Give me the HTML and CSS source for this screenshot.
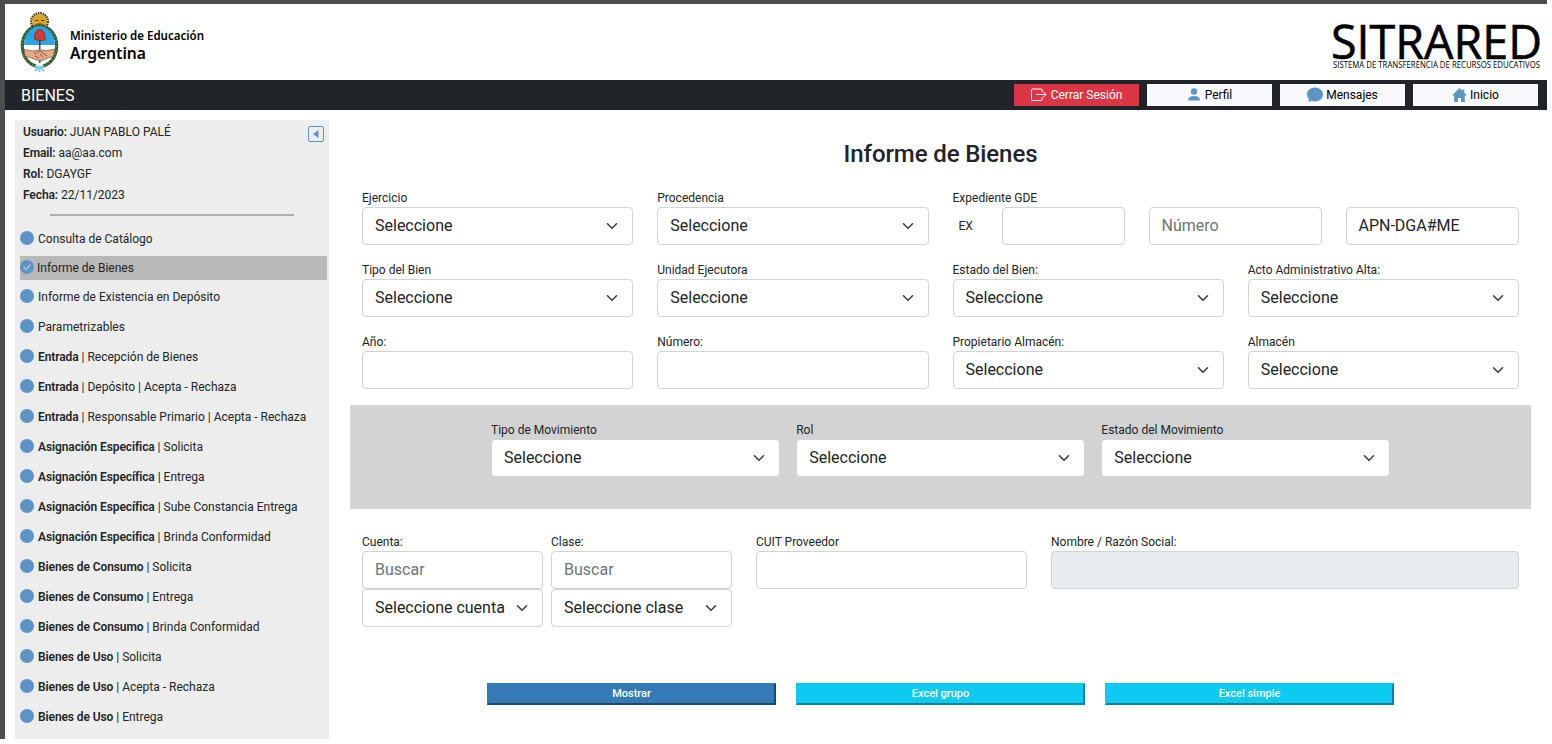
FILE: index.html
```html
<!DOCTYPE html>
<html lang="es">
<head>
<meta charset="utf-8">
<title>Informe de Bienes</title>
<link rel="stylesheet" href="styles.css">
</head>
<body>
<svg class="sprite" aria-hidden="true">
  <symbol id="dot" viewBox="0 0 16 16"><circle cx="8" cy="8" r="8" fill="currentColor"/></symbol>
  <symbol id="check" viewBox="0 0 16 16"><circle cx="8" cy="8" r="8" fill="currentColor"/><path d="M4.6 8.4l2.5 2.5 4.5-5.3" fill="none" stroke="#c4d4e2" stroke-width="1.2" stroke-linecap="round"/></symbol>
  <symbol id="chevron" viewBox="0 0 16 16"><path d="M2 5l6 6 6-6" fill="none" stroke="#343a40" stroke-width="2" stroke-linecap="round" stroke-linejoin="round"/></symbol>
</svg>
<div class="frame">
  <header class="header">
    <svg class="brand" width="200" height="66" viewBox="0 0 200 66">
      <g transform="translate(1 1)">
        <circle cx="18.5" cy="9.500" r="8.200" fill="none" stroke="#3f3516" stroke-width="2.6" stroke-dasharray="1.500 .8"/>
        <circle cx="18.5" cy="9.500" r="7.200" fill="#dfa520"/>
        <path d="M14 8.500h3.500M20 8.500h3.500M16 12h5" stroke="#5b3d0c" stroke-width="1.2"/>
        <ellipse cx="18.5" cy="34" rx="17.2" ry="20.500" fill="#fff" stroke="#2c5c34" stroke-width="3.2"/>
        <ellipse cx="18.5" cy="34" rx="17.2" ry="20.500" fill="none" stroke="#77905f" stroke-width="1.800" stroke-dasharray="1 2.6"/>
        <path d="M3 33a15.5 18.8 0 0 1 31 0z" fill="#2ba6e0"/>
        <path d="M18.8 24v27" stroke="#3b2a25" stroke-width="1.3"/>
        <path d="M13.5 27c.2-6 2-9.500 5.200-9.500 3.800 0 5.300 4 4.900 7.200l1 3c-3 1.200-8 1.200-11.100-.7z" fill="#d83b30" stroke="#6c2723" stroke-width=".7"/>
        <path d="M3 37.500l9 1.500 7-1.200 6 1 8.700-1.800-1 7-7.200 2.500c-4 2.400-8 2.900-13 .3L4 44z" fill="#e2ab86" stroke="#7d5039" stroke-width=".7"/>
        <path d="M13 42l6-3 7 5M14 44l4 2M19 42l3 3" fill="none" stroke="#6d442f" stroke-width=".8"/>
        <path d="M15.500 53.500h6" stroke="#fff" stroke-width="3.600"/>
        <path d="M14 53.500l3 2.500-3 3M23 53.500l-3 2.500 3 3M16 55h5M18.500 54v6" fill="none" stroke="#82cdea" stroke-width="2"/>
      </g>
      <text class="brand-small" x="50" y="28.500" textLength="134" lengthAdjust="spacingAndGlyphs">Ministerio de Educación</text>
      <text class="brand-large" x="50" y="47.500" textLength="76" lengthAdjust="spacingAndGlyphs">Argentina</text>
    </svg>
    <svg class="sitrared" width="212" height="50" viewBox="0 0 212 50">
      <text class="sitrared-name" x="1" y="37" textLength="211" lengthAdjust="spacingAndGlyphs">SITRARED</text>
      <text class="sitrared-sub" x="3" y="45.500" textLength="207" lengthAdjust="spacingAndGlyphs">SISTEMA DE TRANSFERENCIA DE RECURSOS EDUCATIVOS</text>
    </svg>
  </header>
  <nav class="bar">
    <span class="bar-title">BIENES</span>
    <div class="bar-buttons">
      <a class="bar-btn danger"><svg width="16" height="14" viewBox="0 0 16 14"><path d="M11 4V2a1 1 0 0 0-1-1H1.500a1 1 0 0 0-1 1v9.500a1 1 0 0 0 1 1H10a1 1 0 0 0 1-1v-2M5 6.500h10M12 3.500l3 3-3 3" fill="none" stroke="currentColor"/></svg>Cerrar Sesión</a>
      <a class="bar-btn"><svg width="14" height="14" viewBox="0 0 14 14"><circle cx="7" cy="3.500" r="3.200" fill="#5c94c5"/><path d="M1 12.500c0-3 2-4.500 6-4.500s6 1.500 6 4.500z" fill="#5c94c5"/></svg>Perfil</a>
      <a class="bar-btn tight"><svg width="16" height="16" viewBox="0 0 16 16"><path d="M8 14.500c4.400 0 8-3.100 8-7s-3.600-7-8-7-8 3.100-8 7c0 1.800.7 3.400 2 4.600-.1.900-.6 1.900-1 2.700 1.300-.1 2.700-.5 3.700-1A9 9 0 0 0 8 14.500" fill="#5c94c5"/></svg>Mensajes</a>
      <a class="bar-btn tight"><svg width="15" height="15" viewBox="0 0 15 15"><path d="M7.500 0L.5 7l1 .9.700-.6V14H6v-4h3v4h3.800V7.300l.7.600 1-.9-2.200-2.200V1.500h-2v1.300z" fill="#5c94c5"/></svg>Inicio</a>
    </div>
  </nav>
  <div class="content">
    <aside class="sidebar">
      <div class="user">
        <div class="user-lines">
          <p><b>Usuario:</b> JUAN PABLO PALÉ</p>
          <p><b>Email:</b> aa@aa.com</p>
          <p><b>Rol:</b> DGAYGF</p>
          <p><b>Fecha:</b> 22/11/2023</p>
        </div>
        <svg class="collapse" width="16" height="16" viewBox="0 0 16 16"><rect x=".5" y=".5" width="15" height="15" rx="1.500" fill="none" stroke="#5c94c5"/><path d="M10.500 4v8L5 8z" fill="#5c94c5"/></svg>
      </div>
      <hr class="rule">
      <ul class="menu">
        <li><svg><use href="#dot"/></svg><span>Consulta de Catálogo</span></li>
        <li class="active"><svg><use href="#check"/></svg><span>Informe de Bienes</span></li>
        <li><svg><use href="#dot"/></svg><span>Informe de Existencia en Depósito</span></li>
        <li><svg><use href="#dot"/></svg><span>Parametrizables</span></li>
        <li><svg><use href="#dot"/></svg><span><b>Entrada</b> | Recepción de Bienes</span></li>
        <li><svg><use href="#dot"/></svg><span><b>Entrada</b> | Depósito | Acepta - Rechaza</span></li>
        <li><svg><use href="#dot"/></svg><span><b>Entrada</b> | Responsable Primario | Acepta - Rechaza</span></li>
        <li><svg><use href="#dot"/></svg><span><b>Asignación Especifica</b> | Solicita</span></li>
        <li><svg><use href="#dot"/></svg><span><b>Asignación Específica</b> | Entrega</span></li>
        <li><svg><use href="#dot"/></svg><span><b>Asignación Específica</b> | Sube Constancia Entrega</span></li>
        <li><svg><use href="#dot"/></svg><span><b>Asignación Especifica</b> | Brinda Conformidad</span></li>
        <li><svg><use href="#dot"/></svg><span><b>Bienes de Consumo</b> | Solicita</span></li>
        <li><svg><use href="#dot"/></svg><span><b>Bienes de Consumo</b> | Entrega</span></li>
        <li><svg><use href="#dot"/></svg><span><b>Bienes de Consumo</b> | Brinda Conformidad</span></li>
        <li><svg><use href="#dot"/></svg><span><b>Bienes de Uso</b> | Solicita</span></li>
        <li><svg><use href="#dot"/></svg><span><b>Bienes de Uso</b> | Acepta - Rechaza</span></li>
        <li><svg><use href="#dot"/></svg><span><b>Bienes de Uso</b> | Entrega</span></li>
      </ul>
    </aside>
    <main class="main">
      <h1 class="title">Informe de Bienes</h1>
      <div class="grid">
        <div class="field"><label>Ejercicio</label><div class="control">Seleccione<svg><use href="#chevron"/></svg></div></div>
        <div class="field"><label>Procedencia</label><div class="control">Seleccione<svg><use href="#chevron"/></svg></div></div>
        <div class="field wide"><label>Expediente GDE</label>
          <div class="gde"><span class="ex">EX</span><div class="control"></div><div class="control placeholder">Número</div><div class="control">APN-DGA#ME</div></div>
        </div>
        <div class="field"><label>Tipo del Bien</label><div class="control">Seleccione<svg><use href="#chevron"/></svg></div></div>
        <div class="field"><label>Unidad Ejecutora</label><div class="control">Seleccione<svg><use href="#chevron"/></svg></div></div>
        <div class="field"><label>Estado del Bien:</label><div class="control">Seleccione<svg><use href="#chevron"/></svg></div></div>
        <div class="field"><label>Acto Administrativo Alta:</label><div class="control">Seleccione<svg><use href="#chevron"/></svg></div></div>
        <div class="field"><label>Año:</label><div class="control"></div></div>
        <div class="field"><label>Número:</label><div class="control"></div></div>
        <div class="field"><label>Propietario Almacén:</label><div class="control">Seleccione<svg><use href="#chevron"/></svg></div></div>
        <div class="field"><label>Almacén</label><div class="control">Seleccione<svg><use href="#chevron"/></svg></div></div>
      </div>
      <div class="movement">
        <div class="field"><label>Tipo de Movimiento</label><div class="control">Seleccione<svg><use href="#chevron"/></svg></div></div>
        <div class="field"><label>Rol</label><div class="control">Seleccione<svg><use href="#chevron"/></svg></div></div>
        <div class="field"><label>Estado del Movimiento</label><div class="control">Seleccione<svg><use href="#chevron"/></svg></div></div>
      </div>
      <div class="account">
        <div class="pair">
          <div class="field"><label>Cuenta:</label><div class="control placeholder">Buscar</div><div class="control">Seleccione cuenta<svg><use href="#chevron"/></svg></div></div>
          <div class="field"><label>Clase:</label><div class="control placeholder">Buscar</div><div class="control">Seleccione clase<svg><use href="#chevron"/></svg></div></div>
        </div>
        <div class="field"><label>CUIT Proveedor</label><div class="control"></div></div>
        <div class="field"><label>Nombre / Razón Social:</label><div class="control disabled"></div></div>
      </div>
      <div class="actions">
        <button class="action primary">Mostrar</button>
        <button class="action">Excel grupo</button>
        <button class="action">Excel simple</button>
      </div>
    </main>
  </div>
</div>
</body>
</html>
```
FILE: styles.css
```css
* { box-sizing: border-box; }
body {
  margin: 0;
  background: #fff;
  color: #212529;
  font-family: Roboto, sans-serif;
  font-size: 12px;
}
.sprite { display: none; }
.frame {
  width: 1547px;
  height: 739px;
  border-top: 4px solid #4d4d4d;
  border-left: 5px solid #4d4d4d;
  overflow: hidden;
}
.header {
  height: 76px;
  display: flex;
  justify-content: space-between;
  padding: 7px 5px 0 15px;
}
.brand, .sitrared { display: block; overflow: visible; }
.sitrared { margin-top: 11px; }
.brand-small { font: 600 12.5px "Noto Sans", sans-serif; }
.brand-large { font: 600 16.5px "Noto Sans", sans-serif; }
.sitrared-name { font: 400 47px "Open Sans", sans-serif; stroke: #000; stroke-width: 0.6px; }
.sitrared-sub { font: 400 8.5px "Open Sans", sans-serif; }

.bar {
  height: 30px;
  background: #212529;
  display: flex;
  align-items: center;
  justify-content: space-between;
  padding: 0 9px 0 16px;
}
.bar-title { color: #fff; font-size: 16px; }
.bar-buttons { display: flex; gap: 8px; }
.bar-btn {
  width: 125px;
  height: 22px;
  display: flex;
  align-items: center;
  justify-content: center;
  gap: 4px;
  background: #f8f9fa;
  color: #000;
}
.bar-btn.tight { gap: 3px; }
.bar-btn.danger { background: #dc3545; color: #fff; }

.content { display: flex; padding: 10px 16px 0 10px; gap: 21px; }
.sidebar { width: 314px; height: 619px; background: #ededed; flex: none; }
.user { display: flex; justify-content: space-between; padding: 2px 5px 0 8px; }
.user p { margin: 0; line-height: 21px; }
.sidebar b { font-weight: 600; letter-spacing: -0.1px; }
.collapse { margin-top: 4px; }
.rule { width: 244px; height: 2px; border: 0; background: #b0b0b0; margin: 8px 0 0 35px; }
.menu { list-style: none; margin: 8px 2px 0 5px; padding: 0; }
.menu li { height: 30px; display: flex; align-items: center; gap: 4px; }
.menu svg { width: 14px; height: 14px; color: #5c94c5; flex: none; margin-top: -2px; }
.menu .active { height: 24px; margin: 2px 0; gap: 3px; background: #b8b8b8; }

.main { flex: 1; min-width: 0; }
.title {
  margin: 18px 0 0;
  font-size: 24px;
  line-height: 32px;
  font-weight: 500;
  letter-spacing: -0.1px;
  text-align: center;
}
.grid {
  display: grid;
  grid-template-columns: repeat(4, 1fr);
  column-gap: 24px;
  row-gap: 16px;
  padding: 0 12px;
  margin-top: 19px;
}
.field { min-width: 0; }
.field label { display: block; height: 18px; line-height: 18px; white-space: nowrap; }
.wide { grid-column: span 2; }
.control {
  height: 38px;
  display: flex;
  align-items: center;
  justify-content: space-between;
  padding: 0 12px 2px;
  border: 1px solid #ced4da;
  border-radius: 4px;
  background: #fff;
  font-size: 16px;
  white-space: nowrap;
}
.control svg { width: 12px; height: 12px; margin: 2px 2px 0 0; flex: none; }
.placeholder { color: #6c757d; }
.disabled { background: #e9ecef; }
.gde { display: grid; grid-template-columns: 25px 123px 173px 173px; gap: 24px; align-items: center; }
.ex { padding-left: 6px; }
.movement {
  height: 104px;
  margin-top: 16px;
  padding: 16px 141px 0;
  background: #d3d3d3;
  display: grid;
  grid-template-columns: repeat(3, 1fr);
  gap: 16.500px;
}
.movement .control { border-color: #d3d3d3; }
.account {
  display: grid;
  grid-template-columns: 370px 271px 468px;
  gap: 24px;
  padding: 0 12px;
  margin-top: 24px;
}
.pair { display: grid; grid-template-columns: 1fr 1fr; gap: 8px; }
.actions { display: flex; justify-content: center; gap: 20px; margin-top: 56px; }
.action {
  width: 289px;
  height: 22px;
  padding: 0 0 2px;
  border: 2px solid;
  border-color: #0dcaf0 #0d8298 #0d8298 #0dcaf0;
  background: #0dcaf0;
  color: #fff;
  font: 500 11px Roboto, sans-serif;
}
.action.primary {
  background: #337ab7;
  border-color: #337ab7 #1d486c #1d486c #337ab7;
}
```
